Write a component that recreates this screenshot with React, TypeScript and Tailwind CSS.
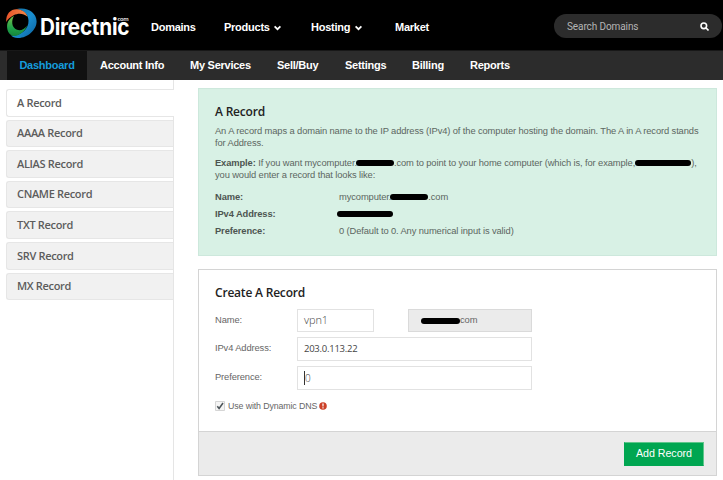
import type { ReactNode } from "react";

const ARIAL = "font-['Liberation_Sans',Arial,sans-serif]";
const OPEN = "font-['Open_Sans','Noto_Sans',sans-serif]";

function Logo() {
  return (
    <svg className="block h-[50px] w-[140px]" viewBox="0 0 140 50" role="img" aria-label="Directnic.com">
      <defs>
        <linearGradient id="blue" x1="0" y1="0" x2="1" y2="1">
          <stop offset="0" stopColor="#126b9e" />
          <stop offset=".5" stopColor="#1a8fd0" />
          <stop offset="1" stopColor="#0b5f9c" />
        </linearGradient>
        <linearGradient id="orange" x1="0" y1="0" x2="1" y2="0">
          <stop offset="0" stopColor="#e8542a" />
          <stop offset="1" stopColor="#f58a4a" />
        </linearGradient>
        <linearGradient id="green" x1="0" y1="0" x2="0" y2="1">
          <stop offset="0" stopColor="#7cc04b" />
          <stop offset=".6" stopColor="#1fa34a" />
          <stop offset="1" stopColor="#16843c" />
        </linearGradient>
      </defs>
      <path d="M17 9.1C27 6.8 36.4 12.6 36.6 21.3C36.8 30 27 38.6 17.5 38C14.7 37.8 12.5 36.8 11 35.4C20 36.8 29 29 28.5 20.5C28.2 14.5 24 10.5 17 9.1Z" fill="url(#blue)" />
      <path d="M6.2 22C5.7 13.5 11 8.8 17.2 9.2C22.2 9.5 26.2 12.4 27.6 16.8C23.5 13 18 13 13.6 15.2C10.2 17 7.6 19.3 6.2 22Z" fill="url(#orange)" />
      <path d="M14 16C11.2 20.5 11.4 27.6 17 29.8C20.5 31.2 24.3 29.4 27.2 25.8C24.5 32 18 36.9 13 36C8.5 34.7 6.3 29.4 7.3 23.8C8.2 20.4 10.8 17.4 14 16Z" fill="url(#green)" />
      <text x="39.9" y="34.6" textLength="89.4" lengthAdjust="spacingAndGlyphs" fill="#fff" fontFamily="Inter, sans-serif" fontWeight="700" fontSize="23">Directnic</text>
      <text x="117.5" y="20.6" textLength="11" lengthAdjust="spacingAndGlyphs" fill="#fff" fontFamily="Open Sans, sans-serif" fontWeight="600" fontSize="6">com</text>
    </svg>
  );
}

function Chevron() {
  return (
    <svg className="ml-[4.5px] mt-[1px] h-[6px] w-[7px]" viewBox="0 0 7 6" fill="none" stroke="#fff" strokeWidth="1.7">
      <path d="M.6 1.3 3.5 4.2 6.4 1.3" />
    </svg>
  );
}

function Redaction({ className }: { className: string }) {
  return <span className={`inline-block rounded-full bg-black ${className}`} />;
}

const topLinks = [
  { label: "Domains", width: "w-[73px]", menu: false },
  { label: "Products", width: "w-[87px]", menu: true },
  { label: "Hosting", width: "w-[84px]", menu: true },
  { label: "Market", width: "w-[40px]", menu: false },
];

const tabs = [
  { label: "Account Info", width: "w-[90px]" },
  { label: "My Services", width: "w-[87px]" },
  { label: "Sell/Buy", width: "w-[68px]" },
  { label: "Settings", width: "w-[67px]" },
  { label: "Billing", width: "w-[58px]" },
  { label: "Reports", width: "w-[60px]" },
];

const records = ["A Record", "AAAA Record", "ALIAS Record", "CNAME Record", "TXT Record", "SRV Record", "MX Record"];

function Header() {
  return (
    <header className={`${ARIAL} text-[11px] font-bold tracking-[-0.25px] text-white`}>
      <div className="flex h-[51px] border-b border-[#181818] bg-black">
        <Logo />
        <nav className="ml-[11px] flex h-[54px] items-center whitespace-nowrap">
          {topLinks.map((l) => (
            <a key={l.label} className={`flex items-center ${l.width}`}>
              {l.label}
              {l.menu && <Chevron />}
            </a>
          ))}
        </nav>
        <div className="ml-auto mr-[1px] mt-[14px] flex h-[24px] w-[168px] items-center justify-between rounded-full bg-[#2c2c2c] pl-[13px] pr-[13px]">
          <span className="font-[Roboto,sans-serif] text-[10px] font-normal tracking-[-0.1px] text-[#b5b5b5]">Search Domains</span>
          <svg className="h-[9px] w-[9px]" viewBox="0 0 9 9" fill="none" stroke="#fff" strokeWidth="1.6">
            <circle cx="3.8" cy="3.8" r="2.8" />
            <path d="m5.8 5.8 2.7 2.7" />
          </svg>
        </div>
      </div>
      <nav className="flex h-[29px] items-center whitespace-nowrap bg-[#2c2c2c] pl-[7px]">
        <a className="mr-[13px] flex h-full w-[80px] items-center justify-center bg-[#111] text-[#159cdb]">Dashboard</a>
        {tabs.map((t) => (
          <a key={t.label} className={t.width}>{t.label}</a>
        ))}
      </nav>
    </header>
  );
}

function Sidebar() {
  return (
    <aside className="flex h-[400px] w-[174px] flex-col gap-[3px] border-r border-[#e5e5e5] pl-[6px] pt-[9px]">
      {records.map((r, i) => (
        <a
          key={r}
          className={`${OPEN} flex h-[27.6px] shrink-0 items-center rounded-l-[3px] border border-r-0 border-[#e6e6e6] pl-[10px] text-[11px] font-semibold tracking-[-0.33px] text-[#5c5c5c] ${i === 0 ? "-mr-px bg-white" : "bg-[#f1f1f1]"}`}
        >
          {r}
        </a>
      ))}
    </aside>
  );
}

function Detail({ label, children }: { label: string; children: ReactNode }) {
  return (
    <div className="flex h-[17px] items-center">
      <b className="w-[124px] text-[#4d5551]">{label}</b>
      <span className="flex items-center">{children}</span>
    </div>
  );
}

function InfoPanel() {
  return (
    <section className="h-[168px] border border-[#cde8dc] bg-[#d8f1e5] pl-[16px] pt-[15px] text-[9.35px] leading-[12px] tracking-[-0.11px] text-[#5c6661]">
      <h2 className={`${OPEN} text-[12px] font-semibold leading-[16px] tracking-[-0.2px] text-[#222]`}>A Record</h2>
      <p className="mt-[5px] whitespace-nowrap">
        An A record maps a domain name to the IP address (IPv4) of the computer hosting the domain. The A in A record stands
        <br />
        for Address.
      </p>
      <p className="mt-[8px] whitespace-nowrap">
        <b className="text-[#4d5551]">Example:</b> If you want mycomputer.
        <Redaction className="-ml-px h-[6px] w-[38px]" />
        <span>.com to point to your home computer (which is, for example,</span>
        <Redaction className="h-[6px] w-[56px]" />
        ),
        <br />
        you would enter a record that looks like:
      </p>
      <div className="mt-[7px]">
        <Detail label="Name:">
          mycomputer.
          <Redaction className="-ml-px mt-px h-[6px] w-[38px]" />
          .com
        </Detail>
        <Detail label="IPv4 Address:">
          <Redaction className="-ml-[2px] h-[6px] w-[56px]" />
        </Detail>
        <Detail label="Preference:">0 (Default to 0. Any numerical input is valid)</Detail>
      </div>
    </section>
  );
}

function CreatePanel() {
  const field = `${OPEN} flex items-center border border-[#e2e2e2] bg-white pl-[6px] text-[#444]`;
  return (
    <section className="mt-[13px] flex h-[207px] flex-col border border-[#d4d4d4] bg-white text-[9.35px] tracking-[-0.11px] text-[#666]">
      <div className="h-[161px] pl-[16px] pt-[15px]">
        <h2 className={`${OPEN} text-[12px] font-semibold leading-[16px] tracking-[-0.2px] text-[#222]`}>Create A Record</h2>
        <div className="mt-[8px] flex h-[23px]">
          <label className="w-[82px] pt-[4px] leading-[14px]">Name:</label>
          <div className={`${field} w-[77px] text-[11px] font-light tracking-[-0.1px]`}>vpn1</div>
          <div className="ml-[34px] flex w-[124px] items-center border border-[#dadada] bg-[#ebebeb] pl-[12px]">
            <Redaction className="mt-px h-[6px] w-[39px]" />
            com
          </div>
        </div>
        <div className="mt-[5px] flex h-[24px]">
          <label className="w-[82px] pt-[4px] leading-[14px]">IPv4 Address:</label>
          <div className={`${field} w-[235px] text-[9.5px] font-normal tracking-[-0.25px]`}>203.0.113.22</div>
        </div>
        <div className="mt-[5px] flex h-[24px]">
          <label className="w-[82px] pt-[4px] leading-[14px]">Preference:</label>
          <div className={`${field} w-[235px] text-[10px] font-light`}>
            <i className="h-[14px] w-px bg-[#333]" />0
          </div>
        </div>
        <div className="mt-[10px] flex h-[12px] items-center text-[8.8px] tracking-[-0.11px]">
          <svg className="mr-[3px] h-[10px] w-[10px]" viewBox="0 0 10 10" fill="none">
            <path d="M.5.5h9v9h-9Z" fill="#f5f5f5" stroke="#d5d5d5" />
            <path d="m2.3 5.2 1.8 2.3L8 2" stroke="#4b5358" strokeWidth="1.5" />
          </svg>
          <span className="pt-px">Use with Dynamic DNS</span>
          <svg className="ml-[2px] h-[8px] w-[8px]" viewBox="0 0 8 8">
            <circle cx="4" cy="4" r="3.8" fill="#cc4128" />
            <path d="M3.3 1.4h1.4l-.2 3.2h-1ZM3.4 5.3h1.2v1.2H3.4Z" fill="#fff" />
          </svg>
        </div>
      </div>
      <div className="flex flex-1 items-center justify-end border-t border-[#d4d4d4] bg-[#ebebeb] pr-[12px]">
        <button className="h-[24px] w-[80px] border border-[#5fc68b] border-b-[#00a651] border-l-[#00a651] bg-[#00a651] text-[10.7px] tracking-[-0.05px] text-white">Add Record</button>
      </div>
    </section>
  );
}

export default function App() {
  return (
    <div className={`${ARIAL} h-[480px] w-[723px] overflow-hidden bg-white`}>
      <Header />
      <div className="flex">
        <Sidebar />
        <main className="ml-[24px] w-[519px] pt-[8px]">
          <InfoPanel />
          <CreatePanel />
        </main>
      </div>
    </div>
  );
}
